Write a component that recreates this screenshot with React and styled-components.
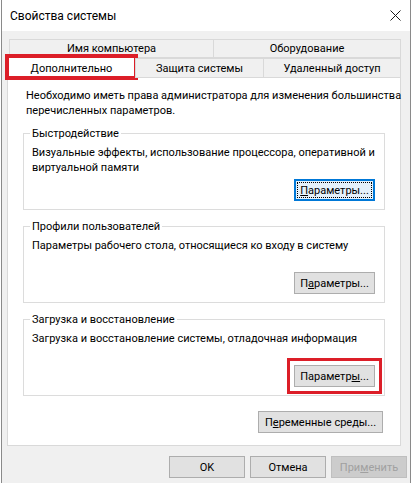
import React from "react";
import styled, { createGlobalStyle, css } from "styled-components";

const GlobalStyle = createGlobalStyle`
  html, body {
    margin: 0;
    padding: 0;
    background: #ffffff;
  }
  body {
    font-family: Roboto, "Liberation Sans", Arial, sans-serif;
    font-size: 11px;
    color: #000;
  }
`;

const highlight = css`
  outline: 4px solid #dc1e28;
`;

const Window = styled.div`
  box-sizing: border-box;
  width: 410px;
  height: 483px;
  margin-left: 1px;
  border-left: 1px solid #8a8a8a;
  border-right: 1px solid #8a8a8a;
  display: flex;
  flex-direction: column;
  background: #f0f0f0;
  overflow: hidden;
`;

const TitleBar = styled.div`
  height: 31px;
  background: #ffffff;
  display: flex;
  align-items: center;
  justify-content: space-between;
  padding: 0 9px 0 8px;
  flex-shrink: 0;
`;

const Title = styled.span`
  font-size: 12px;
  line-height: 15px;
  margin-top: 1px;
`;

const CloseIcon = styled.svg`
  width: 11px;
  height: 11px;
`;

const Body = styled.div`
  padding: 9px 0 0 5px;
  display: flex;
  flex-direction: column;
`;

const TabStrip = styled.div`
  width: 394px;
  display: flex;
  flex-direction: column;
`;

const TabRow = styled.div`
  display: flex;
  height: ${(p) => p.$height}px;
  align-items: flex-end;
  padding: 0 1px 0 ${(p) => p.$indent}px;
  position: relative;
  z-index: ${(p) => p.$layer};
  margin-bottom: ${(p) => p.$overlap}px;
`;

const Tab = styled.div`
  box-sizing: border-box;
  width: ${(p) => p.$width}px;
  height: ${(p) => p.$h}px;
  flex-shrink: 0;
  display: flex;
  align-items: center;
  justify-content: center;
  background: ${(p) => (p.$active ? "#ffffff" : "#f0f0f0")};
  border: 1px solid #d9d9d9;
  border-bottom: ${(p) => (p.$active ? "none" : "1px solid #d9d9d9")};
  margin-left: ${(p) => (p.$first ? 0 : -1)}px;
  line-height: 15px;
  padding-top: ${(p) => (p.$active ? 1 : 0)}px;
  ${(p) => p.$marked && highlight}
  outline-offset: -2px;
`;

const Panel = styled.div`
  box-sizing: border-box;
  width: 394px;
  background: #ffffff;
  border: 1px solid #d9d9d9;
  padding: 10px 15px 12px 15px;
  display: flex;
  flex-direction: column;
`;

const Intro = styled.p`
  margin: 0 0 0 3px;
  line-height: 15px;
  white-space: nowrap;
`;

const Group = styled.fieldset`
  margin: ${(p) => p.$top}px 0 0 0;
  border: 1px solid #dcdcdc;
  padding: 0 9px 8px 8px;
  min-width: 0;
  display: flex;
  flex-direction: column;
`;

const Legend = styled.legend`
  padding: 0 2px;
  margin-left: -2px;
  line-height: 15px;
`;

const GroupText = styled.p`
  margin: 4px 0 0 0;
  min-height: 30px;
  line-height: 15px;
`;

const ButtonRow = styled.div`
  display: flex;
  justify-content: flex-end;
  gap: 5px;
  margin-top: ${(p) => p.$top || 0}px;
  padding-right: ${(p) => p.$right || 0}px;
`;

const Button = styled.button`
  box-sizing: border-box;
  width: ${(p) => p.$width}px;
  height: 22px;
  padding: 0;
  font-family: inherit;
  font-size: 11px;
  color: #000;
  background: #e1e1e1;
  border: 1px solid #adadad;
  border-radius: 0;
  ${(p) =>
    p.$default &&
    css`
      border: 2px solid #0078d7;
      background: #e5f1fb;
      outline: 1px dotted #000;
      outline-offset: -4px;
    `}
  ${(p) =>
    p.disabled &&
    css`
      background: #cccccc;
      border-color: #bfbfbf;
      color: #a0a0a0;
    `}
  ${(p) =>
    p.$marked &&
    css`
      outline: 3px solid #dc1e28;
      outline-offset: 4px;
    `}
`;

const Footer = styled.div`
  padding: 10px 3px 0 0;
`;

const groups = [
  {
    title: "Быстродействие",
    text: "Визуальные эффекты, использование процессора, оперативной и виртуальной памяти",
    label: ["", "П", "араметры..."],
    focused: true,
  },
  {
    title: "Профили пользователей",
    text: "Параметры рабочего стола, относящиеся ко входу в систему",
    label: ["П", "а", "раметры..."],
  },
  {
    title: "Загрузка и восстановление",
    text: "Загрузка и восстановление системы, отладочная информация",
    label: ["Параметр", "ы", "..."],
    marked: true,
  },
];

export default function App() {
  return (
    <>
      <GlobalStyle />
      <Window>
        <TitleBar>
          <Title>Свойства системы</Title>
          <CloseIcon viewBox="0 0 11 11">
            <path d="M0.5 0.5 L10.5 10.5 M10.5 0.5 L0.5 10.5" stroke="#1a1a1a" strokeWidth="1" />
          </CloseIcon>
        </TitleBar>
        <Body>
          <TabStrip>
            <TabRow $height={18} $indent={2} $layer={0} $overlap={0}>
              <Tab $width={205} $h={19} $first>
                Имя компьютера
              </Tab>
              <Tab $width={188} $h={19}>
                Оборудование
              </Tab>
            </TabRow>
            <TabRow $height={20} $indent={0} $layer={1} $overlap={-1}>
              <Tab $width={129} $h={22} $first $active $marked>
                Дополнительно
              </Tab>
              <Tab $width={129} $h={20}>
                Защита системы
              </Tab>
              <Tab $width={138} $h={20}>
                Удаленный доступ
              </Tab>
            </TabRow>
          </TabStrip>
          <Panel>
            <Intro>
              Необходимо иметь права администратора для изменения большинства
              <br />
              перечисленных параметров.
            </Intro>
            {groups.map((g, i) => (
              <Group key={g.title} $top={i === 0 ? 8 : 9}>
                <Legend>{g.title}</Legend>
                <GroupText>{g.text}</GroupText>
                <ButtonRow $top={4}>
                  <Button $width={81} $default={g.focused} $marked={g.marked}>
                    {g.label[0]}
                    <u>{g.label[1]}</u>
                    {g.label[2]}
                  </Button>
                </ButtonRow>
              </Group>
            ))}
            <ButtonRow $top={15} $right={2}>
              <Button $width={125}>
                П<u>е</u>ременные среды...
              </Button>
            </ButtonRow>
          </Panel>
          <Footer>
            <ButtonRow>
              <Button $width={76}>OK</Button>
              <Button $width={76}>Отмена</Button>
              <Button $width={76} disabled>
                При<u>м</u>енить
              </Button>
            </ButtonRow>
          </Footer>
        </Body>
      </Window>
    </>
  );
}
